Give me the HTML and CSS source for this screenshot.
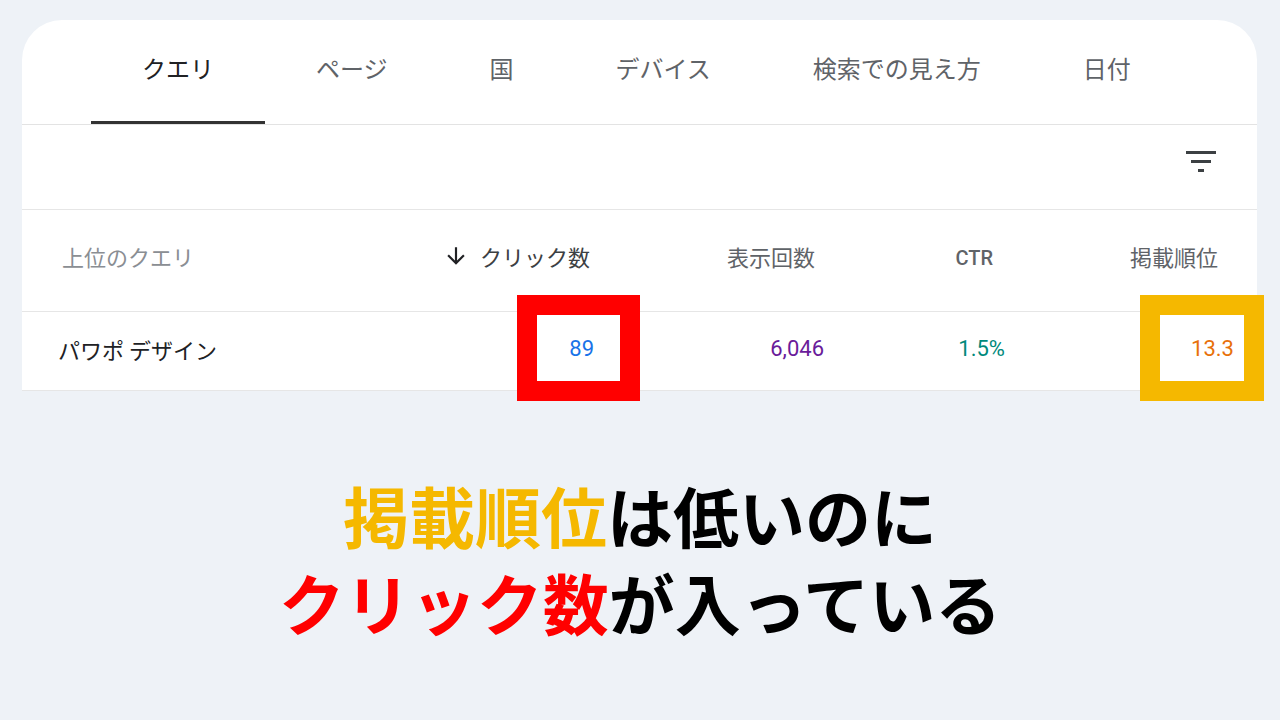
FILE: index.html
```html
<!DOCTYPE html>
<html lang="ja">
<head>
<meta charset="utf-8">
<title>掲載順位とクリック数</title>
<link rel="stylesheet" href="styles.css">
</head>
<body>
<div class="card">
  <nav class="tabs">
    <div class="tab active">クエリ</div>
    <div class="tab">ページ</div>
    <div class="tab">国</div>
    <div class="tab">デバイス</div>
    <div class="tab">検索での見え方</div>
    <div class="tab">日付</div>
  </nav>
  <div class="toolbar">
    <svg class="filter-icon" width="30" height="21" viewBox="0 0 30 21">
      <rect x="0" y="0" width="30" height="3" fill="#3c4043"/>
      <rect x="5" y="9" width="20" height="3" fill="#3c4043"/>
      <rect x="12" y="18" width="6" height="3" fill="#3c4043"/>
    </svg>
  </div>
  <div class="grid head">
    <div class="cell name">上位のクエリ</div>
    <div class="cell num sort">
      <svg class="arrow" width="26" height="26" viewBox="0 0 24 24"><path d="M20 12l-1.41-1.41L13 16.17V4h-2v12.17l-5.58-5.59L4 12l8 8 8-8z" fill="#202124"/></svg>
      <span>クリック数</span>
    </div>
    <div class="cell num">表示回数</div>
    <div class="cell num ctr">CTR</div>
    <div class="cell num">掲載順位</div>
  </div>
  <div class="grid row">
    <div class="cell name">パワポ デザイン</div>
    <div class="cell num v-click">89</div>
    <div class="cell num v-imp">6,046</div>
    <div class="cell num v-ctr">1.5%</div>
    <div class="cell num v-pos">13.3</div>
  </div>
</div>
<div class="mark mark-red"></div>
<div class="mark mark-yellow"></div>
<div class="caption">
  <p><span class="yellow">掲載順位</span>は低いのに</p>
  <p><span class="red">クリック数</span>が入っている</p>
</div>
</body>
</html>
```
FILE: styles.css
```css
html, body {
  margin: 0;
  padding: 0;
}
body {
  background: #eef2f7;
  width: 1280px;
  height: 720px;
  overflow: hidden;
  position: relative;
  font-family: "Noto Sans CJK JP", "Noto Sans", sans-serif;
}
.card {
  margin: 20px 23px 0 22px;
  background: #fff;
  border-radius: 40px 40px 0 0;
}
.tabs {
  display: flex;
  padding-left: 69px;
  border-bottom: 1px solid #e3e3e3;
}
.tab {
  box-sizing: border-box;
  height: 104px;
  padding: 32px 51px 0;
  font-size: 24px;
  line-height: 32px;
  color: #5f6368;
  border-bottom: 3px solid transparent;
  white-space: nowrap;
}
.tab.active {
  color: #202124;
  border-bottom-color: #333;
}
.toolbar {
  box-sizing: border-box;
  height: 85px;
  display: flex;
  justify-content: flex-end;
  align-items: flex-start;
  padding: 26px 41px 0 0;
  border-bottom: 1px solid #e6e6e6;
}
.grid {
  display: grid;
  align-items: center;
  box-sizing: border-box;
  border-bottom: 1px solid #e6e6e6;
}
.head {
  height: 102px;
  padding: 0 39px 10px 40px;
  grid-template-columns: 1fr 208px 225px 178px 225px;
  font-size: 22px;
  color: #5f6368;
}
.row {
  height: 79px;
  padding: 0 23px 4px 36px;
  grid-template-columns: 1fr 212px 230px 181px 229px;
  font-size: 22px;
}
.cell {
  line-height: 30px;
  white-space: nowrap;
}
.num {
  text-align: right;
}
.head .name {
  color: #8a8e93;
}
.sort {
  display: flex;
  justify-content: flex-end;
  align-items: center;
  gap: 11px;
  color: #3c4043;
}
.arrow {
  display: block;
}
.ctr {
  font-family: Roboto, "Liberation Sans", sans-serif;
  font-weight: 500;
  font-size: 20px;
  padding-top: 4px;
}
.row .name {
  color: #202124;
}
.row .num {
  font-family: Roboto, "Liberation Sans", sans-serif;
  font-size: 22px;
}
.v-click { color: #1a73e8; }
.v-imp { color: #6a1b9a; }
.v-ctr { color: #00897b; }
.v-pos { color: #e8710a; }
.mark {
  position: absolute;
  top: 295px;
  box-sizing: border-box;
  height: 106px;
  border: 20px solid;
}
.mark-red {
  left: 517px;
  width: 123px;
  border-color: #ff0000;
}
.mark-yellow {
  left: 1140px;
  width: 124px;
  border-color: #f5b800;
}
.caption {
  margin-top: 80px;
  text-align: center;
  font-weight: 700;
  font-size: 66px;
  color: #000;
}
.caption p {
  margin: 0;
  line-height: 87px;
}
.yellow { color: #f5b800; }
.red { color: #ff0000; }
```
